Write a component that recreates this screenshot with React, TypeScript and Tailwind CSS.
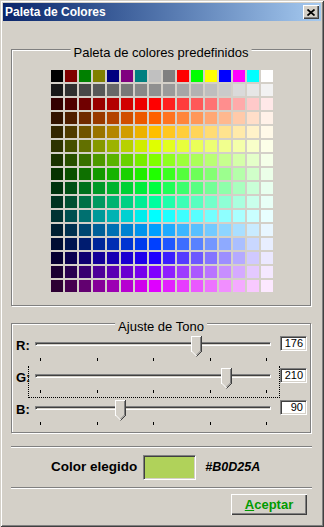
import React from 'react';

const STANDARD = [
  '#000000', '#800000', '#008000', '#808000', '#000080', '#800080', '#008080', '#c0c0c0',
  '#808080', '#ff0000', '#00ff00', '#ffff00', '#0000ff', '#ff00ff', '#00ffff', '#ffffff',
];
const GRAYS = [0x18, 0x30, 0x48, 0x58, 0x68, 0x78, 0x88, 0x90, 0x9a, 0xa6, 0xb2, 0xbe, 0xca, 0xda, 0xe6, 0xf2];
// first half darkens the pure hue, second half mixes it with white
const DARK = [0.2, 0.31, 0.44, 0.6, 0.7, 0.82, 0.93, 1];
const LIGHT = [0.12, 0.235, 0.345, 0.45, 0.557, 0.667, 0.79, 0.91];

const hex = (r: number, g: number, b: number) =>
  '#' + [r, g, b].map((v) => Math.round(v).toString(16).padStart(2, '0')).join('');

function pureHue(h: number) {
  const f = (n: number) => {
    const k = (n + h / 60) % 6;
    return 1 - Math.max(0, Math.min(k, 4 - k, 1));
  };
  return [f(5), f(3), f(1)];
}

function buildPalette() {
  const rows: string[][] = [STANDARD, GRAYS.map((g) => hex(g, g, g))];
  for (let r = 0; r < 14; r++) {
    const base = pureHue(r * 22.5);
    const row: string[] = [];
    for (let i = 0; i < 16; i++) {
      if (i < 8) {
        const v = DARK[i];
        row.push(hex(base[0] * v * 255, base[1] * v * 255, base[2] * v * 255));
      } else {
        const w = LIGHT[i - 8];
        row.push(hex(...(base.map((c) => (c + (1 - c) * w) * 255) as [number, number, number])));
      }
    }
    rows.push(row);
  }
  return rows;
}

const palette = buildPalette();

function GroupBox({ title, className, children }: { title: string; className?: string; children: React.ReactNode }) {
  return (
    <div className={`relative ml-[8px] w-[300px] border border-[#808080] shadow-[inset_1px_1px_0_#fff,1px_1px_0_#fff] ${className ?? ''}`}>
      <span className="absolute left-1/2 -translate-x-1/2 -top-[5px] bg-[#d4d0c8] px-[3px] text-[13px] leading-[15px] whitespace-nowrap text-black">
        {title}
      </span>
      {children}
    </div>
  );
}

function Thumb() {
  return (
    <svg width="11" height="21" viewBox="0 0 11 21" shapeRendering="crispEdges">
      <polygon points="0,0 11,0 11,15 5.5,20.5 0,15" fill="#d4d0c8" shapeRendering="auto" />
      <line x1="0" y1="0.5" x2="10" y2="0.5" stroke="#fff" />
      <line x1="0.5" y1="0" x2="0.5" y2="15.5" stroke="#fff" />
      <line x1="0.5" y1="15" x2="5.5" y2="20" stroke="#fff" shapeRendering="auto" />
      <line x1="9.5" y1="1" x2="9.5" y2="15" stroke="#808080" />
      <line x1="9.5" y1="15" x2="5.5" y2="19" stroke="#808080" shapeRendering="auto" />
      <line x1="10.5" y1="0" x2="10.5" y2="15.5" stroke="#404040" />
      <line x1="10.5" y1="15.5" x2="5.5" y2="20.5" stroke="#404040" shapeRendering="auto" />
    </svg>
  );
}

function SliderRow({ label, value, focused }: { label: string; value: number; focused?: boolean }) {
  const thumbLeft = 12 + (value * 227) / 255 - 5.5;
  return (
    <div className="flex h-[32px]">
      <div className="w-[16px] pl-[4px] pt-[4px] text-[13px] leading-[15px] font-bold text-black whitespace-nowrap">
        {label}
      </div>
      <div className="relative w-[252px] h-[32px]">
        <div className="ml-[7px] mt-[8px] w-[236px] h-[4px] border border-t-[#808080] border-l-[#808080] border-b-white border-r-white shadow-[inset_1px_1px_0_#404040]" />
        <div className="ml-[12px] mt-[12px] w-[227px] flex justify-between">
          {[0, 1, 2, 3, 4].map((i) => (
            <div key={i} className="w-px h-[3px] bg-black" />
          ))}
        </div>
        <div className="absolute top-[2px]" style={{ left: Math.round(thumbLeft) }}>
          <Thumb />
        </div>
        {focused && (
          <div className="absolute inset-0 border-l border-b border-r border-dotted border-black" />
        )}
      </div>
      <div className="relative mt-[2px] w-[27px] h-[15px] bg-white border border-t-[#808080] border-l-[#808080] border-b-white border-r-white shadow-[inset_1px_1px_0_#404040,inset_-1px_-1px_0_#d4d0c8] text-right pr-[3px] text-[11px] leading-[13px] text-black">
        {value}
      </div>
    </div>
  );
}

export default function App() {
  const r = 176;
  const g = 210;
  const b = 90;
  const chosen = hex(r, g, b).toUpperCase();

  return (
    <div className="w-[324px] h-[527px] bg-[#d4d0c8] p-[3px] font-['Liberation_Sans',Arial,sans-serif] shadow-[inset_1px_1px_0_#d4d0c8,inset_-1px_-1px_0_#404040,inset_2px_2px_0_#fff,inset_-2px_-2px_0_#808080] overflow-hidden">
      <div className="h-[18px] flex items-center justify-between bg-gradient-to-r from-[#0a246a] to-[#a6caf0] pl-[2px] pr-[2px]">
        <span className="text-white font-bold text-[12px] leading-[14px]">Paleta de Colores</span>
        <button className="w-[16px] h-[14px] bg-[#d4d0c8] flex items-center justify-center shadow-[inset_1px_1px_0_#fff,inset_-1px_-1px_0_#404040,inset_-2px_-2px_0_#808080]">
          <svg width="8" height="7" viewBox="0 0 8 7">
            <path d="M0.5 0.5 L7.5 6.5 M7.5 0.5 L0.5 6.5" stroke="#000" strokeWidth="1.7" />
          </svg>
        </button>
      </div>

      <GroupBox title="Paleta de colores predefinidos" className="mt-[28px] pt-[20px] pb-[13px] pl-[39px]">
        <div className="grid grid-cols-[repeat(16,12px)] gap-[2px]">
          {palette.flat().map((c, i) => (
            <div key={i} className="h-[12px]" style={{ backgroundColor: c }} />
          ))}
        </div>
      </GroupBox>

      <GroupBox title="Ajuste de Tono" className="mt-[17px] pt-[10px] pb-[2px]">
        <SliderRow label="R:" value={r} />
        <SliderRow label="G:" value={g} focused />
        <SliderRow label="B:" value={b} />
      </GroupBox>

      <div className="ml-[8px] mt-[13px] w-[301px] h-[2px] border-t border-t-[#808080] border-b border-b-white" />

      <div className="ml-[8px] w-[301px] h-[39px] flex items-center pl-[40px]">
        <span className="text-[13.5px] font-bold text-black whitespace-nowrap">Color elegido</span>
        <div
          className="ml-[6px] w-[53px] h-[25px] border border-t-[#808080] border-l-[#808080] border-b-white border-r-white shadow-[inset_1px_1px_0_#404040,inset_-1px_-1px_0_#d4d0c8]"
          style={{ backgroundColor: chosen }}
        />
        <span className="ml-[9px] text-[12.5px] font-bold italic text-black">{chosen}</span>
      </div>

      <div className="ml-[8px] w-[301px] h-[2px] border-t border-t-[#808080] border-b border-b-white" />

      <div className="ml-[8px] w-[301px] mt-[5px] flex justify-end pr-[5px]">
        <button className="w-[76px] h-[21px] bg-[#d4d0c8] text-[13px] font-bold text-[#009a00] shadow-[inset_1px_1px_0_#fff,inset_-1px_-1px_0_#404040,inset_-2px_-2px_0_#808080]">
          <span className="underline">A</span>ceptar
        </button>
      </div>
    </div>
  );
}
